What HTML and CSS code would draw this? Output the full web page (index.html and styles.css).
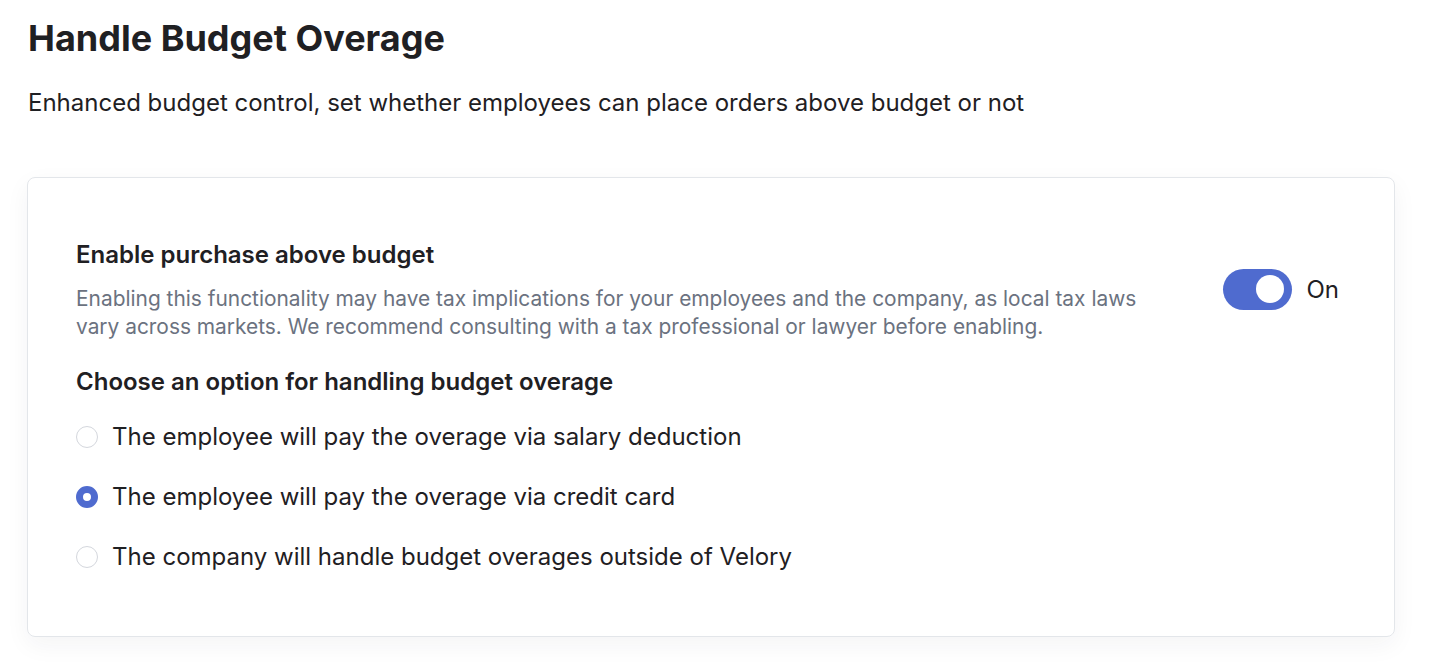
FILE: index.html
```html
<!DOCTYPE html>
<html lang="en">
<head>
  <meta charset="UTF-8">
  <meta name="viewport" content="width=device-width, initial-scale=1.0">
  <title>Handle Budget Overage</title>
  <link rel="stylesheet" href="styles.css">
</head>
<body>
  <div class="page">
    <h1 class="page-title">Handle Budget Overage</h1>
    <p class="page-desc">Enhanced budget control, set whether employees can place orders above budget or not</p>

    <div class="card">
      <div class="setting-row">
        <div class="setting-text">
          <h3 class="setting-title">Enable purchase above budget</h3>
          <p class="setting-note">Enabling this functionality may have tax implications for your employees and the company, as local tax laws vary across markets. We recommend consulting with a tax professional or lawyer before enabling.</p>
        </div>
        <label class="toggle">
          <input type="checkbox" checked>
          <span class="toggle-track"><span class="toggle-knob"></span></span>
          <span class="toggle-label">On</span>
        </label>
      </div>

      <h3 class="options-title">Choose an option for handling budget overage</h3>
      <div class="options">
        <label class="option">
          <input type="radio" name="overage">
          <span class="radio"></span>
          The employee will pay the overage via salary deduction
        </label>
        <label class="option">
          <input type="radio" name="overage" checked>
          <span class="radio"></span>
          The employee will pay the overage via credit card
        </label>
        <label class="option">
          <input type="radio" name="overage">
          <span class="radio"></span>
          The company will handle budget overages outside of Velory
        </label>
      </div>
    </div>
  </div>
</body>
</html>
```

FILE: styles.css
```css
body {
  margin: 0;
  font-family: Inter, "Noto Sans", Arial, sans-serif;
  color: #1f2023;
  background: #ffffff;
}

.page {
  padding: 16px 35px 30px 27px;
}

.page-title {
  margin: 0 0 0 1px;
  font-size: 36px;
  font-weight: 700;
  line-height: 44px;
}

.page-desc {
  margin: 28px 0 0 1px;
  font-size: 24px;
  line-height: 30px;
}

.card {
  margin-top: 59px;
  border: 1px solid #e3e6ea;
  border-radius: 8px;
  padding: 62px 55px 64px 48px;
  box-shadow: 0 8px 24px rgba(30, 40, 60, 0.05);
}

.setting-row {
  display: flex;
  justify-content: space-between;
  align-items: center;
}

.setting-text {
  max-width: 1080px;
}

.setting-title,
.options-title {
  margin: 0;
  font-size: 24px;
  font-weight: 600;
  line-height: 30px;
}

.setting-note {
  margin: 15px 0 0;
  font-size: 20.9px;
  line-height: 28px;
  color: #6b7280;
}

.toggle {
  display: flex;
  align-items: center;
  gap: 14px;
  margin-top: -3px;
  cursor: pointer;
}

.toggle input,
.option input {
  display: none;
}

.toggle-track {
  width: 69px;
  height: 41px;
  border-radius: 21px;
  background: #4f6bcf;
  display: flex;
  align-items: center;
  justify-content: flex-end;
  padding: 0 8px;
  box-sizing: border-box;
}

.toggle-knob {
  width: 28px;
  height: 28px;
  border-radius: 50%;
  background: #ffffff;
}

.toggle-label {
  font-size: 24px;
}

.options-title {
  margin-top: 26px;
}

.options {
  display: flex;
  flex-direction: column;
  gap: 30px;
  margin-top: 25px;
}

.option {
  display: flex;
  align-items: center;
  gap: 14px;
  font-size: 24px;
  line-height: 30px;
  cursor: pointer;
}

.radio {
  width: 22px;
  height: 22px;
  border: 1px solid #d4d7dd;
  border-radius: 50%;
  box-sizing: border-box;
}

.option input:checked + .radio {
  border: 7px solid #4f6bcf;
}
```
